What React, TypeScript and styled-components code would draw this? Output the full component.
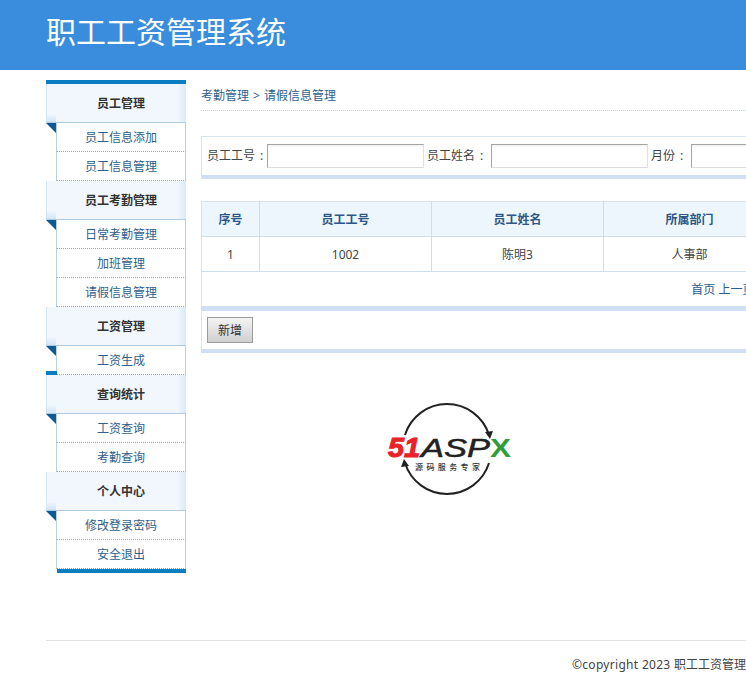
import React from 'react'
import styled, { createGlobalStyle } from 'styled-components'

const GlobalStyle = createGlobalStyle`
  html, body {
    margin: 0;
    padding: 0;
    background: #fff;
    overflow: hidden;
    font-family: "Noto Sans", "Noto Sans CJK SC", "Liberation Sans", sans-serif;
    font-size: 12px;
    color: #444;
  }
`

const Header = styled.header`
  height: 70px;
  background: #398ddc;
  padding-left: 46px;
  box-sizing: border-box;
  width: 100%;
`

const Title = styled.h1`
  margin: 0;
  font-size: 30px;
  font-weight: 400;
  line-height: 63px;
  color: #fff;
  white-space: nowrap;
`

const Wrapper = styled.div`
  width: 1250px;
  margin-left: 46px;
`

const Content = styled.div`
  display: flex;
  gap: 15px;
  padding-top: 10px;
`

const Sidebar = styled.aside`
  width: 140px;
  flex: none;
  border-top: 4px solid #0b7dc1;
`

const MenuHeading = styled.div<{ $stub?: boolean }>`
  position: relative;
  height: 38px;
  line-height: 40px;
  padding-left: 10px;
  text-align: center;
  font-weight: 700;
  color: #333;
  background:
    linear-gradient(0deg, #cfe4f7 0%, rgba(207, 228, 247, 0) 100%) left bottom / 10px 8px no-repeat,
    linear-gradient(90deg, #f1f7fd 0%, #f1f7fd 94%, #d9e9f9 100%);
  border-bottom: 1px solid #afcbe2;
  box-shadow: inset 1px 0 0 #d5e4f1;

  &::after {
    content: '';
    position: absolute;
    left: 0;
    bottom: -11px;
    border-style: solid;
    border-width: 10px 0 0 10px;
    border-color: #0f5a94 transparent transparent transparent;
  }

  &::before {
    content: '';
    display: ${({ $stub }) => ($stub ? 'block' : 'none')};
    position: absolute;
    left: 0;
    top: -4px;
    width: 11px;
    height: 4px;
    background: #0b7dc1;
  }
`

const MenuItem = styled.a`
  display: block;
  height: 28px;
  line-height: 30px;
  margin-left: 10px;
  text-align: center;
  color: #2f5f8c;
  background: #fff;
  border-left: 1px solid #b9d0e4;
  border-right: 1px solid #b9d0e4;
  border-bottom: 1px dotted #8fa9bf;
`

const SidebarEnd = styled.div`
  height: 4px;
  margin-left: 11px;
  background: #0b7dc1;
`

const Main = styled.main`
  flex: 1;
  min-width: 0;
`

const Breadcrumb = styled.div`
  height: 30px;
  line-height: 32px;
  margin-bottom: 25px;
  color: #2f5f8c;
  border-bottom: 1px dotted #c5d3df;
`

const Crumb = styled.span`
  margin-right: 4px;
`

const SearchBar = styled.div`
  display: flex;
  align-items: center;
  height: 38px;
  padding-left: 5px;
  border: 1px solid #d6e4ef;
  border-bottom: 4px solid #d0dff3;
  margin-bottom: 22px;
  white-space: nowrap;
`

const SearchLabel = styled.label`
  flex: none;
  padding-bottom: 2px;
  color: #444;
`

const Colon = styled.span<{ $wide?: boolean }>`
  display: inline-block;
  width: 3px;
  margin-left: 5px;
  margin-right: ${({ $wide }) => ($wide ? 8 : 4)}px;
`

const SearchInput = styled.input`
  width: 157px;
  height: 24px;
  box-sizing: border-box;
  margin-right: 3px;
  padding: 0;
  flex: none;
  border-style: solid;
  border-width: 1px;
  border-color: #a5a5a5 #e2e2e2 #dcdcdc #a5a5a5;
  box-shadow: inset 0 1px 2px #eee;
  background: #fff;
`

const Table = styled.table`
  width: 100%;
  table-layout: fixed;
  border-collapse: collapse;
  border: 1px solid #d6e4ef;
  border-bottom: 0;
`

const Th = styled.th<{ $width?: number }>`
  width: ${({ $width }) => ($width ? `${$width}px` : 'auto')};
  height: 34px;
  padding: 0;
  font-weight: 700;
  color: #2c5687;
  background: #edf6fd;
  border-right: 1px solid #cfdeeb;
  border-bottom: 1px solid #cfdeeb;
`

const Td = styled.td`
  height: 34px;
  padding: 0;
  text-align: center;
  color: #444;
  border-right: 1px solid #cfdeeb;
  border-bottom: 1px solid #cfdeeb;
`

const Pager = styled.div`
  height: 34px;
  line-height: 36px;
  padding-left: 14px;
  text-align: center;
  color: #2c5c8e;
  border-left: 1px solid #d6e4ef;
  border-bottom: 5px solid #d0dff3;
`

const ActionBar = styled.div`
  box-sizing: border-box;
  height: 42px;
  padding: 6px 0 0 5px;
  border-left: 1px solid #d6e4ef;
  border-bottom: 4px solid #d0dff3;
`

const AddButton = styled.button`
  width: 46px;
  height: 26px;
  padding: 0;
  font: inherit;
  color: #333;
  background: linear-gradient(180deg, #f3f3f3 0%, #d0d0d0 100%);
  border: 1px solid #9a9a9a;
`

const LogoBox = styled.div`
  padding: 46px 0 0 184px;
`

const Footer = styled.footer`
  margin-top: 67px;
  height: 47px;
  line-height: 47px;
  text-align: center;
  color: #444;
  border-top: 1px solid #e2e2e2;
  white-space: nowrap;
`

const Copyright = styled.span`
  letter-spacing: 0.3px;
`

const Logo = () => (
  <svg width="130" height="100" viewBox="0 0 130 100" style={{ display: 'block' }}>
    <path d="M 20 36 A 44 44 0 0 1 104 36" fill="none" stroke="#222" strokeWidth="2" />
    <path d="M 100 33 L 105 40 L 108 32 Z" fill="#222" />
    <path d="M 104 64 A 44 44 0 0 1 20 64" fill="none" stroke="#222" strokeWidth="2" />
    <path d="M 16 68 L 19 60 L 24 67 Z" fill="#222" />
    <text x="3" y="58" fontFamily="Liberation Sans" fontWeight="700" fontStyle="italic" fontSize="27" fill="#e8232a" stroke="#e8232a" strokeWidth="1" textLength="32" lengthAdjust="spacingAndGlyphs">51</text>
    <text x="36" y="58" fontFamily="Liberation Sans" fontWeight="400" fontStyle="italic" fontSize="26" fill="#222" stroke="#222" strokeWidth="0.5" textLength="69" lengthAdjust="spacingAndGlyphs">ASP</text>
    <text x="105" y="58" fontFamily="Liberation Sans" fontWeight="700" fontSize="26" fill="#2f9e3a" textLength="21" lengthAdjust="spacingAndGlyphs">X</text>
    <text x="30" y="71" fontFamily="Noto Sans CJK SC" fontSize="8" fontWeight="500" fill="#333" textLength="65">源码服务专家</text>
  </svg>
)

const menus = [
  { title: '员工管理', items: ['员工信息添加', '员工信息管理'] },
  { title: '员工考勤管理', items: ['日常考勤管理', '加班管理', '请假信息管理'] },
  { title: '工资管理', items: ['工资生成'] },
  { title: '查询统计', items: ['工资查询', '考勤查询'], stub: true },
  { title: '个人中心', items: ['修改登录密码', '安全退出'] },
]

const App: React.FunctionComponent = () => {
  return (
    <>
      <GlobalStyle />
      <Header>
        <Title>职工工资管理系统</Title>
      </Header>
      <Wrapper>
        <Content>
          <Sidebar>
            {menus.map((menu) => (
              <div key={menu.title}>
                <MenuHeading $stub={menu.stub}>{menu.title}</MenuHeading>
                {menu.items.map((item) => (
                  <MenuItem key={item}>{item}</MenuItem>
                ))}
              </div>
            ))}
            <SidebarEnd />
          </Sidebar>
          <Main>
            <Breadcrumb>
              <Crumb>考勤管理</Crumb>
              <Crumb>&gt;</Crumb>
              <span>请假信息管理</span>
            </Breadcrumb>
            <SearchBar>
              <SearchLabel>员工工号<Colon>:</Colon></SearchLabel>
              <SearchInput />
              <SearchLabel>员工姓名<Colon $wide>:</Colon></SearchLabel>
              <SearchInput />
              <SearchLabel>月份<Colon $wide>:</Colon></SearchLabel>
              <SearchInput />
            </SearchBar>
            <Table>
              <thead>
                <tr>
                  <Th $width={57}>序号</Th>
                  <Th $width={171}>员工工号</Th>
                  <Th $width={171}>员工姓名</Th>
                  <Th $width={171}>所属部门</Th>
                  <Th>月份</Th>
                  <Th>请假天数</Th>
                </tr>
              </thead>
              <tbody>
                <tr>
                  <Td>1</Td>
                  <Td>1002</Td>
                  <Td>陈明3</Td>
                  <Td>人事部</Td>
                  <Td>2023-05</Td>
                  <Td>2</Td>
                </tr>
              </tbody>
            </Table>
            <Pager>首页 上一页 下一页 尾页</Pager>
            <ActionBar>
              <AddButton>新增</AddButton>
            </ActionBar>
            <LogoBox>
              <Logo />
            </LogoBox>
          </Main>
        </Content>
        <Footer><Copyright>©copyright 2023 </Copyright>职工工资管理系统</Footer>
      </Wrapper>
    </>
  )
}

export default App
